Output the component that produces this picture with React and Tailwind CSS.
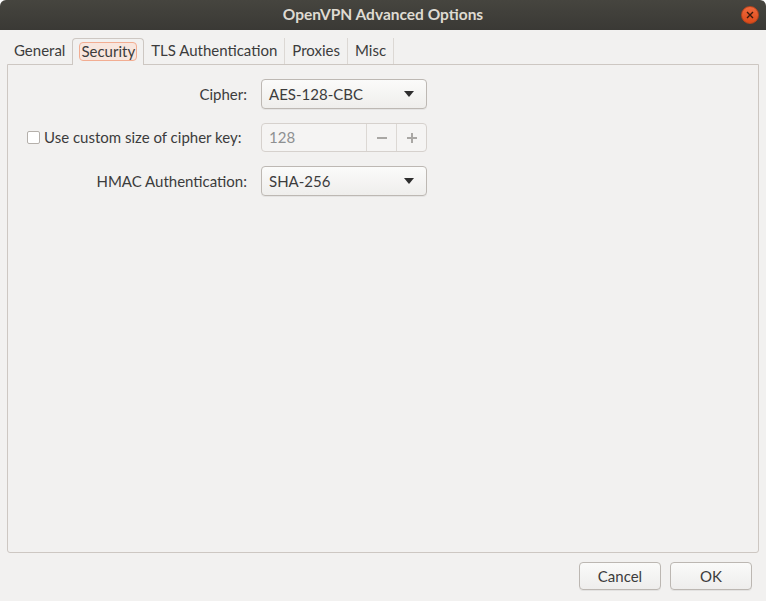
import React from 'react';

const Combo = ({ value }) => (
  <div className="w-[166px] h-[30px] flex items-center justify-between pl-[7px] pr-[12px] rounded-[4px] border border-[#bdb8b3] bg-gradient-to-b from-[#fbfbfa] to-[#efeeec] shadow-[0_1px_0_rgba(0,0,0,0.05)]">
    <span className="text-[#3c3c3c]">{value}</span>
    <svg width="10" height="6" viewBox="0 0 10 6">
      <path d="M0 0 L10 0 L5 6 Z" fill="#2e2e2e" />
    </svg>
  </div>
);

const SpinBox = () => (
  <div className="w-[166px] h-[29px] flex rounded-[4px] border border-[#d6d1cd] bg-[#f5f4f3]">
    <div className="flex-1 flex items-center pl-[7px] text-[#8e9091]">128</div>
    <div className="w-[30px] flex items-center justify-center border-l border-[#dcd8d4]">
      <svg width="12" height="12" viewBox="0 0 12 12">
        <path d="M1 6 H11" stroke="#a9a7a4" strokeWidth="2" />
      </svg>
    </div>
    <div className="w-[30px] flex items-center justify-center border-l border-[#dcd8d4]">
      <svg width="12" height="12" viewBox="0 0 12 12">
        <path d="M1 6 H11 M6 1 V11" stroke="#a9a7a4" strokeWidth="2" />
      </svg>
    </div>
  </div>
);

const Button = ({ children }) => (
  <button className="w-[82px] h-[28px] rounded-[4px] border border-[#bcb7b2] bg-gradient-to-b from-[#fafaf9] to-[#eeedec] text-[#3c3c3c] shadow-[0_1px_0_rgba(0,0,0,0.06)]">
    {children}
  </button>
);

export default function App() {
  const font = { fontFamily: 'Lato, "Noto Sans", sans-serif' };

  return (
    <div className="w-[766px] h-[601px] bg-[#f2f1f0] flex flex-col rounded-t-[6px] overflow-hidden text-[15px] text-[#3c3c3c]" style={font}>
      {/* Title bar */}
      <div className="relative h-[30px] shrink-0 flex items-center justify-center bg-gradient-to-b from-[#46453f] to-[#3a3935]">
        <span className="font-bold text-[#dfdbd2] text-[15.5px]">OpenVPN Advanced Options</span>
        <div className="absolute right-[7px] top-[6px] w-[18px] h-[18px] rounded-full bg-gradient-to-b from-[#f0693c] to-[#dc4a18] border border-[#b8441c] flex items-center justify-center">
          <svg width="8" height="8" viewBox="0 0 8 8">
            <path d="M1 1 L7 7 M7 1 L1 7" stroke="#3a1a0c" strokeWidth="1.4" />
          </svg>
        </div>
      </div>

      {/* Tabs */}
      <div className="flex items-end h-[34px] pl-[7px] shrink-0">
        <div className="h-[26px] px-[7px] pb-[2px] flex items-center">General</div>
        <div className="h-[27px] px-[6px] pb-[2px] flex items-center border border-b-0 border-[#cdc7c2] rounded-t-[4px] bg-[#f2f1f0] -mb-px relative z-10">
          <span className="px-[1px] rounded-[4px] border border-[#f2ad92] bg-[#f8e6de] leading-[16px] pb-[1px]">Security</span>
        </div>
        <div className="h-[26px] px-[7px] pb-[2px] flex items-center border-r border-[#dcd8d4]">TLS Authentication</div>
        <div className="h-[26px] px-[7px] pb-[2px] flex items-center border-r border-[#dcd8d4]">Proxies</div>
        <div className="h-[26px] px-[7px] pb-[2px] flex items-center border-r border-[#dcd8d4]">Misc</div>
      </div>

      {/* Panel */}
      <div className="mx-[7px] h-[489px] shrink-0 border border-[#cdc7c2] rounded-b-[3px] pt-[14px] flex flex-col gap-[14px]">
        <div className="flex items-center">
          <div className="w-[239px] text-right">Cipher:</div>
          <div className="ml-[14px]"><Combo value="AES-128-CBC" /></div>
        </div>
        <div className="flex items-center">
          <div className="w-[239px] flex items-center pl-[19px]">
            <div className="w-[13px] h-[13px] rounded-[2px] border border-[#b5b0ab] bg-white" />
            <span className="ml-[4px]">Use custom size of cipher key:</span>
          </div>
          <div className="ml-[14px]"><SpinBox /></div>
        </div>
        <div className="flex items-center">
          <div className="w-[239px] text-right">HMAC Authentication:</div>
          <div className="ml-[14px]"><Combo value="SHA-256" /></div>
        </div>
      </div>

      {/* Buttons */}
      <div className="flex justify-end gap-[9px] pr-[14px] pt-[9px]">
        <Button>Cancel</Button>
        <Button>OK</Button>
      </div>
    </div>
  );
}
